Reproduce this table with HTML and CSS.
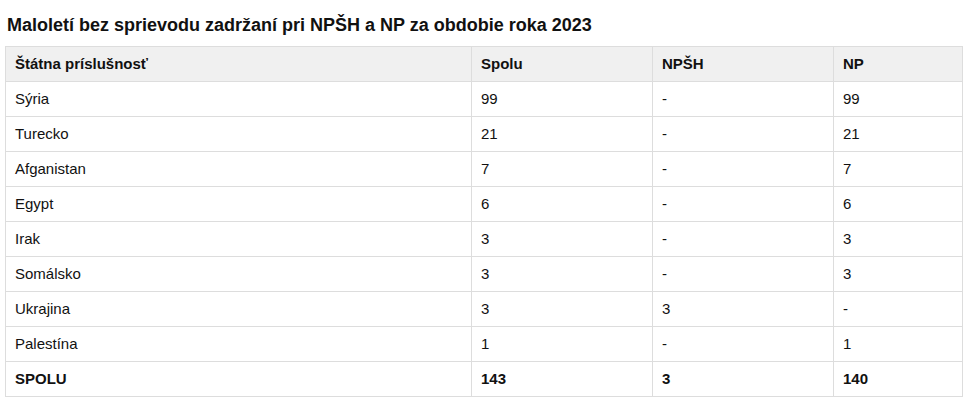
FILE: index.html
```html
<!DOCTYPE html>
<html lang="sk">
<head>
<meta charset="utf-8">
<title>Maloletí bez sprievodu</title>
<link rel="stylesheet" href="styles.css">
</head>
<body>
<div class="wrap">
  <h3 class="title">Maloletí bez sprievodu zadržaní pri NPŠH a NP za obdobie roka 2023</h3>
  <table class="data">
    <colgroup>
      <col class="c1"><col class="c2"><col class="c3"><col class="c4">
    </colgroup>
    <thead>
      <tr><th>Štátna príslušnosť</th><th>Spolu</th><th>NPŠH</th><th>NP</th></tr>
    </thead>
    <tbody>
      <tr><td>Sýria</td><td>99</td><td>-</td><td>99</td></tr>
      <tr><td>Turecko</td><td>21</td><td>-</td><td>21</td></tr>
      <tr><td>Afganistan</td><td>7</td><td>-</td><td>7</td></tr>
      <tr><td>Egypt</td><td>6</td><td>-</td><td>6</td></tr>
      <tr><td>Irak</td><td>3</td><td>-</td><td>3</td></tr>
      <tr><td>Somálsko</td><td>3</td><td>-</td><td>3</td></tr>
      <tr><td>Ukrajina</td><td>3</td><td>3</td><td>-</td></tr>
      <tr><td>Palestína</td><td>1</td><td>-</td><td>1</td></tr>
      <tr class="total"><td>SPOLU</td><td>143</td><td>3</td><td>140</td></tr>
    </tbody>
  </table>
</div>
</body>
</html>
```

FILE: styles.css
```css
html, body {
  margin: 0;
  padding: 0;
  background: #ffffff;
}
body {
  font-family: "Liberation Sans", Arial, Helvetica, sans-serif;
  color: #111111;
}
.wrap {
  padding: 15px 5px 0 5px;
}
.title {
  margin: 0 0 11px 2px;
  font-size: 18px;
  line-height: 20px;
  font-weight: bold;
  color: #111111;
}
.data {
  border-collapse: collapse;
  table-layout: fixed;
  width: 957px;
  font-size: 15px;
}
.c1 { width: 466px; }
.c2 { width: 181px; }
.c3 { width: 181px; }
.c4 { width: 129px; }
.data th,
.data td {
  border: 1px solid #dddddd;
  padding: 0 9px 1px 9px;
  height: 33px;
  text-align: left;
  vertical-align: middle;
  line-height: 17px;
}
.data th {
  background: #f0f0f0;
  font-weight: bold;
}
.data .total td {
  font-weight: bold;
}
```
